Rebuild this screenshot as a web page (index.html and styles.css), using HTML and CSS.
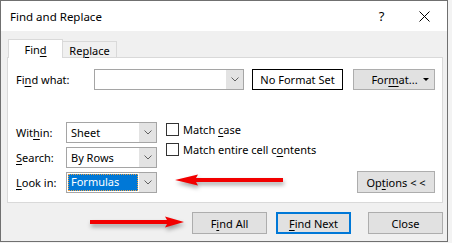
FILE: index.html
```html
<!DOCTYPE html>
<html lang="en">
  <head>
    <meta charset="UTF-8" />
    <title>Find and Replace</title>
    <link rel="stylesheet" href="styles.css">
  </head>
  <body>
    <div class="dialog">
      <div class="titlebar">
        <span class="title">Find and Replace</span>
        <span class="cap help">?</span>
        <span class="cap">
          <svg width="11" height="11" viewBox="0 0 11 11"><path d="M0.5 0.5 L10.5 10.5 M10.5 0.5 L0.5 10.5" stroke="#000" stroke-width="1" fill="none"/></svg>
        </span>
      </div>

      <div class="client">
        <div class="tabs">
          <div class="tab active"><span>Fin<u>d</u></span></div>
          <div class="tab"><span>Re<u>p</u>lace</span></div>
        </div>

        <div class="panel">
          <!-- find what row -->
          <div class="find-row">
            <label class="find-label">Fi<u>n</u>d what:</label>
            <div class="combo find-combo">
              <span class="combo-text"></span>
              <span class="drop"><svg width="8" height="5" viewBox="0 0 8 5"><path d="M0.5 0.5 L4 4 L7.5 0.5" stroke="#606060" fill="none"/></svg></span>
            </div>
            <div class="no-format">No Format Set</div>
            <button class="btn format-btn"><span>For<u>m</u>at...</span><span class="caret"></span></button>
          </div>

          <!-- options -->
          <div class="options">
            <div class="selects">
              <div class="select-row">
                <label class="opt-label">Wit<u>h</u>in:</label>
                <div class="combo small">
                  <span class="combo-text">Sheet</span>
                  <span class="drop"><svg width="8" height="5" viewBox="0 0 8 5"><path d="M0.5 0.5 L4 4 L7.5 0.5" stroke="#606060" fill="none"/></svg></span>
                </div>
              </div>
              <div class="select-row">
                <label class="opt-label"><u>S</u>earch:</label>
                <div class="combo small">
                  <span class="combo-text">By Rows</span>
                  <span class="drop"><svg width="8" height="5" viewBox="0 0 8 5"><path d="M0.5 0.5 L4 4 L7.5 0.5" stroke="#606060" fill="none"/></svg></span>
                </div>
              </div>
              <div class="select-row">
                <label class="opt-label"><u>L</u>ook in:</label>
                <div class="combo small">
                  <span class="combo-text"><span class="selected">Formulas</span></span>
                  <span class="drop"><svg width="8" height="5" viewBox="0 0 8 5"><path d="M0.5 0.5 L4 4 L7.5 0.5" stroke="#606060" fill="none"/></svg></span>
                </div>
              </div>
            </div>

            <div class="checks">
              <div class="check-row"><span class="box"></span><span>Match <u>c</u>ase</span></div>
              <div class="check-row"><span class="box"></span><span>Match entire cell c<u>o</u>ntents</span></div>
            </div>

            <button class="btn options-btn"><span>Op<u>t</u>ions &lt; &lt;</span></button>
          </div>
        </div>

        <div class="actions">
          <button class="btn action"><span>F<u>i</u>nd All</span></button>
          <button class="btn action default"><span><u>F</u>ind Next</span></button>
          <button class="btn action close"><span>Close</span></button>
        </div>
      </div>

      <!-- red annotation arrows -->
      <svg class="arrows" width="448" height="242" viewBox="0 0 448 242">
        <polygon points="175,180 198,174.5 196,178 283,178 283,182 196,182 198,185.5" fill="#f20000"/>
        <polygon points="90,220 167,220 165,216.5 184,222 165,227.5 167,224 90,224" fill="#f20000"/>
      </svg>
    </div>
  </body>
</html>
```

FILE: styles.css
```css
* {
  box-sizing: border-box;
  margin: 0;
  padding: 0;
}

body {
  background: #f3f3f3;
  font-family: "Noto Sans", "Open Sans", sans-serif;
  font-size: 11px;
  color: #000;
}

u {
  text-decoration-thickness: 1px;
  text-underline-offset: 2px;
}

.dialog {
  position: relative;
  width: 448px;
  height: 242px;
  border: 1px solid #707070;
  background: #f0f0f0;
}

.titlebar {
  height: 30px;
  background: #fff;
  display: flex;
  align-items: center;
  padding-left: 9px;
}

.title {
  flex: 1;
  font-size: 11.5px;
}

.cap {
  width: 43px;
  height: 30px;
  display: flex;
  align-items: center;
  justify-content: center;
}

.cap:last-child {
  margin-right: 1px;
}

.help {
  font-size: 13px;
}

.client {
  padding: 8px 4px 0 6px;
}

/* tabs */
.tabs {
  display: flex;
  align-items: flex-end;
  height: 19px;
  margin-bottom: -1px;
  margin-left: 1px;
  position: relative;
  z-index: 1;
}

.tab {
  width: 55px;
  height: 16px;
  margin-bottom: 1px;
  margin-left: -1px;
  border: 1px solid #d9d9d9;
  border-bottom: none;
  background: #f0f0f0;
  display: flex;
  align-items: center;
  justify-content: center;
  padding-top: 1px;
}

.tab.active {
  height: 19px;
  margin: 0;
  background: #fff;
  position: relative;
  z-index: 2;
  padding-top: 0;
}

.panel {
  width: 436px;
  height: 146px;
  background: #fff;
  border: 1px solid #d9d9d9;
  padding: 11px 0 0 8px;
}

/* first row */
.find-row {
  display: flex;
  align-items: center;
  height: 21px;
}

.find-label {
  width: 78px;
}

.combo {
  display: flex;
  height: 21px;
  border: 1px solid #a5a5a5;
  background: #fff;
}

.find-combo {
  width: 150px;
}

.combo-text {
  flex: 1;
  display: flex;
  align-items: center;
  padding-left: 4px;
}

.drop {
  width: 17px;
  background: #e3e3e3;
  display: flex;
  align-items: center;
  justify-content: center;
}

.no-format {
  width: 91px;
  height: 21px;
  margin-left: 8px;
  border: 1px solid #000;
  display: flex;
  align-items: center;
  justify-content: center;
}

.btn {
  font-family: inherit;
  font-size: 11px;
  color: #000;
  background: #e1e1e1;
  border: 1px solid #adadad;
  height: 22px;
  display: flex;
  align-items: center;
  justify-content: center;
}

.format-btn {
  width: 82px;
  height: 21px;
  margin-left: 10px;
  padding-left: 12px;
}

.format-btn span:first-child {
  flex: 1;
}

.caret {
  width: 0;
  height: 0;
  border-left: 3px solid transparent;
  border-right: 3px solid transparent;
  border-top: 3px solid #000;
  margin-right: 5px;
}

/* options */
.options {
  display: flex;
  margin-top: 32px;
}

.selects {
  display: flex;
  flex-direction: column;
  gap: 4px;
}

.select-row {
  display: flex;
  align-items: center;
}

.opt-label {
  width: 50px;
}

.combo.small {
  width: 91px;
}

.selected {
  background: #0078d7;
  color: #fff;
  border: 1px dotted #f0a040;
  margin-left: -3px;
  padding: 0 2px 1px 2px;
  width: 70px;
  height: 17px;
  line-height: 14px;
}

.checks {
  display: flex;
  flex-direction: column;
  gap: 7px;
  margin-left: 9px;
  margin-top: 1px;
}

.check-row {
  display: flex;
  align-items: center;
  height: 13px;
}

.box {
  width: 13px;
  height: 13px;
  border: 1px solid #333;
  background: #fff;
  margin-right: 4px;
}

.options-btn {
  width: 78px;
  margin-left: auto;
  margin-right: 7px;
  align-self: flex-end;
}

/* bottom buttons */
.actions {
  display: flex;
  justify-content: flex-end;
  margin-top: 9px;
}

.action {
  width: 75px;
}

.action.default {
  margin-left: 9px;
  border: 2px solid #0078d7;
}

.action.close {
  margin-left: 17px;
}

.arrows {
  position: absolute;
  left: -1px;
  top: -1px;
  pointer-events: none;
  filter: drop-shadow(1px 3px 2px rgba(0, 0, 0, 0.35));
}
```
